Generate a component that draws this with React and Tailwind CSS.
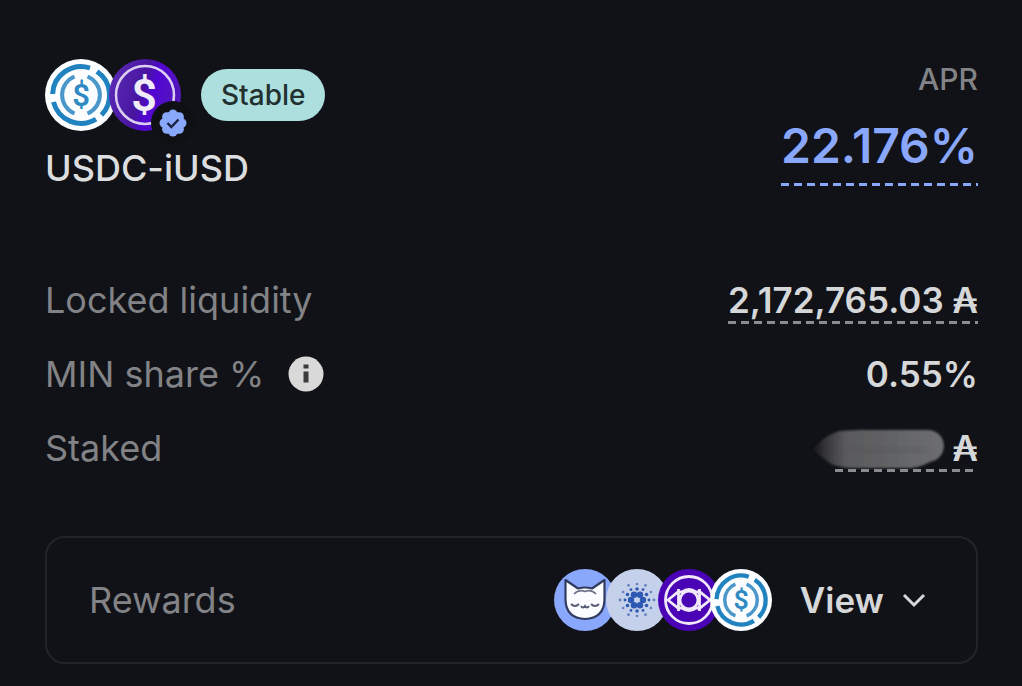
import { useId } from "react";

function UsdcCoin({ className }) {
  return (
    <svg viewBox="0 0 72 72" className={className} role="img" aria-label="USDC">
      <circle cx="36" cy="36" r="36" fill="#fcfdfe" />
      <g fill="none" stroke="#2083c0" strokeWidth="5">
        <path d="M7.600 35A28.500 28.500 0 0 1 45 9" />
        <path d="M52 12.500A28.500 28.500 0 0 1 56.500 56" />
        <path d="M51 60.200A28.500 28.500 0 0 1 8.500 43" />
      </g>
      <g fill="none" stroke="#4a97ca" strokeWidth="4">
        <path d="M29.500 17.500A20 20 0 0 0 29.500 54.500" />
        <path d="M42.500 17.500A20 20 0 0 1 42.500 54.500" />
      </g>
      <text x="36" y="47" textAnchor="middle" fontFamily="Roboto, sans-serif" fontSize="31" fontWeight="600" fill="#2f8ac3">$</text>
    </svg>
  );
}

function IusdCoin({ className }) {
  const id = useId();
  return (
    <svg viewBox="0 0 72 72" className={className} role="img" aria-label="iUSD">
      <defs>
        <linearGradient id={id} x1="0" y1="0.300" x2="1" y2="0.600">
          <stop offset="0" stopColor="#5a2bb5" />
          <stop offset="0.450" stopColor="#48159f" />
          <stop offset="0.600" stopColor="#5206d2" />
          <stop offset="1" stopColor="#5319b8" />
        </linearGradient>
      </defs>
      <circle cx="36" cy="36" r="36" fill={`url(#${id})`} />
      <circle cx="36" cy="36" r="29" fill="none" stroke="#dccff3" strokeWidth="2.500" />
      <text x="35" y="52" textAnchor="middle" fontFamily="Roboto, sans-serif" fontSize="45" fontWeight="600" fill="#f1edf8">$</text>
    </svg>
  );
}

function CatCoin({ className }) {
  return (
    <svg viewBox="0 0 62 62" className={className} role="img" aria-label="MIN">
      <circle cx="31" cy="31" r="31" fill="#8aa8fb" />
      <path d="M11.500 11L24 19.500Q31 17.500 38 19.500L50.500 11V31Q50 49 31 50Q12 49 11.500 31Z" fill="#fbfcff" stroke="#313b60" strokeWidth="2.200" strokeLinejoin="round" />
      <path d="M20 25Q25 20 31 22.500Q37 20 42 25" fill="none" stroke="#6a7187" strokeWidth="1.600" />
      <path d="M17 35q4 4 8 0M37 35q4 4 8 0M27 37q2 3 4 0q2 3 4 0" fill="none" stroke="#555c73" strokeWidth="2" />
    </svg>
  );
}

const ringDots = (count, radius, offset) =>
  Array.from({ length: count }, (_, i) => {
    const a = ((i + offset) * 2 * Math.PI) / count;
    return [31 + radius * Math.cos(a), 31 + radius * Math.sin(a)];
  });

function AdaCoin({ className }) {
  return (
    <svg viewBox="0 0 62 62" className={className} role="img" aria-label="ADA">
      <circle cx="31" cy="31" r="31" fill="#c5d0ea" />
      <g fill="#2d59b5">
        {ringDots(6, 6, 0).map(([x, y]) => <circle key={`${x}${y}`} cx={x} cy={y} r="3.200" />)}
        {ringDots(6, 11, 0.5).map(([x, y]) => <circle key={`${x}${y}`} cx={x} cy={y} r="1.800" />)}
        {ringDots(6, 12, 0).map(([x, y]) => <circle key={`${x}${y}`} cx={x} cy={y} r="1.400" />)}
      </g>
      <g fill="#6580bd">
        {ringDots(6, 16, 0.5).map(([x, y]) => <circle key={`${x}${y}`} cx={x} cy={y} r="1.300" />)}
        {ringDots(6, 17, 0).map(([x, y]) => <circle key={`${x}${y}`} cx={x} cy={y} r="1.400" />)}
      </g>
    </svg>
  );
}

function EyeCoin({ className }) {
  return (
    <svg viewBox="0 0 62 62" className={className} role="img" aria-label="INDY">
      <circle cx="31" cy="31" r="31" fill="#4b04b5" />
      <g fill="none" stroke="#f1e9fb" strokeWidth="2.800">
        <circle cx="31" cy="31" r="23.500" />
        <path d="M10 31L20 23H24Q31 18 38 23H42L52 31L42 39H38Q31 44 24 39H20Z" />
        <path d="M20.500 20V42M41.500 20V42" />
        <circle cx="31" cy="31" r="9" />
      </g>
    </svg>
  );
}

const lobes = [0, 1, 2, 3, 4, 5, 6, 7].map((i) => {
  const a = (i * Math.PI) / 4;
  return [14 + 9 * Math.cos(a), 14 + 9 * Math.sin(a)];
});

function VerifiedBadge({ className }) {
  return (
    <svg viewBox="0 0 28 28" className={className} role="img" aria-label="Verified">
      <g fill="#8aa8fb">
        <circle cx="14" cy="14" r="11.500" />
        {lobes.map(([x, y]) => <circle key={`${x}${y}`} cx={x} cy={y} r="4.500" />)}
      </g>
      <path d="M8.500 14l3.800 4 7.200-7.500" fill="none" stroke="#1b2340" strokeWidth="2.400" />
    </svg>
  );
}

function InfoIcon({ className }) {
  return (
    <svg viewBox="0 0 36 36" className={className} aria-hidden="true">
      <circle cx="18" cy="18" r="17.500" fill="#d9d9da" />
      <path d="M15.500 8.500h5v4h-5zM15.500 15.500h5v11h-5z" fill="#3a3a3d" />
    </svg>
  );
}

function Smudge({ className }) {
  const id = useId();
  return (
    <svg viewBox="0 0 134 44" className={className} role="img" aria-label="Hidden amount">
      <defs>
        <linearGradient id={id} x1="0" x2="1">
          <stop offset="0" stopColor="#111217" />
          <stop offset="0.100" stopColor="#343538" />
          <stop offset="0.250" stopColor="#595a5c" />
          <stop offset="0.600" stopColor="#626365" />
          <stop offset="1" stopColor="#6d6e70" />
        </linearGradient>
        <filter id={`${id}b`}><feGaussianBlur stdDeviation="1" /></filter>
        <filter id={`${id}s`} x="-10%" y="-200%" width="120%" height="500%"><feGaussianBlur stdDeviation="4" /></filter>
      </defs>
      <path filter={`url(#${id}b)`} d="M1 23Q8 18 12 13Q20 8 28 5L48 4H118Q132 6 133 20Q132 33 119 36Q110 41 100 42H40Q28 41 20 38Q10 31 1 23Z" fill={`url(#${id})`} />
      <path filter={`url(#${id}s)`} d="M36 23.500H116V25H36Z" fill="#48494b" />
    </svg>
  );
}

const underline = "bg-[repeating-linear-gradient(90deg,#8b8c8f_0_8px,transparent_8px_13px)] bg-[length:100%_3px] bg-bottom bg-no-repeat";

function Row({ label, children }) {
  return (
    <div className="flex items-center justify-between">
      <dt className="flex items-center gap-6 text-[36px] leading-[48px] text-[#828386]">{label}</dt>
      <dd className="text-[35px] leading-[48px] font-semibold text-[#d6d7d9]">{children}</dd>
    </div>
  );
}

export default function App() {
  return (
    <main className="min-h-screen bg-[#111217] pt-[59px] pr-11 pb-[22px] pl-[45px] font-['Inter',sans-serif]">
      <header className="flex items-start justify-between">
        <div>
          <div className="flex items-center gap-5">
            <div className="relative flex">
              <UsdcCoin className="size-[72px]" />
              <IusdCoin className="-ml-2 size-[72px]" />
              <span className="absolute -right-3.5 -bottom-3.5 flex size-11 items-center justify-center rounded-full bg-[#0f1014]">
                <VerifiedBadge className="size-7" />
              </span>
            </div>
            <span className="rounded-full bg-[#addfdf] px-5 text-[28px] leading-[52px] font-medium text-[#22312f]">Stable</span>
          </div>
          <h1 className="mt-[15px] text-[36px] leading-[44px] font-medium text-[#dcdddf]">USDC-iUSD</h1>
        </div>
        <div className="flex flex-col items-end">
          <span className="text-[30px] leading-[40px] font-medium text-[#828386]">APR</span>
          <span className="mt-[15px] bg-[repeating-linear-gradient(90deg,#8aa8fb_0_8px,transparent_8px_13px)] bg-[length:100%_3px] bg-bottom bg-no-repeat pb-2 text-[48px] leading-[64px] font-semibold text-[#8aa8fb]">22.176%</span>
        </div>
      </header>

      <dl className="mt-[86px] flex flex-col gap-[26px]">
        <Row label="Locked liquidity">
          <span className={`block ${underline}`}>2,172,765.03 ₳</span>
        </Row>
        <Row
          label={
            <>
              MIN share %
              <button type="button" aria-label="About MIN share"><InfoIcon className="size-9" /></button>
            </>
          }
        >
          0.55%
        </Row>
        <Row label="Staked">
          <span className={`flex items-center gap-2 ${underline}`}>
            <Smudge className="-ml-6 h-11 w-[134px]" />₳
          </span>
        </Row>
      </dl>

      <section className="mt-16 flex h-32 items-center justify-between rounded-[20px] border-2 border-[#232428] pr-[50px] pl-[42px]">
        <h2 className="text-[36px] leading-[48px] text-[#828386]">Rewards</h2>
        <div className="flex items-center gap-7">
          <div className="flex">
            <CatCoin className="size-[62px]" />
            <AdaCoin className="-ml-2.5 size-[62px]" />
            <EyeCoin className="-ml-2.5 size-[62px]" />
            <UsdcCoin className="-ml-2.5 size-[62px]" />
          </div>
          <button type="button" className="flex items-center gap-[18px] text-[35px] leading-[48px] font-semibold text-[#d6d7d9]">
            View
            <svg viewBox="0 0 24 24" className="size-6" fill="none" stroke="#d6d7d9" strokeWidth="3" aria-hidden="true">
              <path d="M2 7l10 10L22 7" />
            </svg>
          </button>
        </div>
      </section>
    </main>
  );
}
